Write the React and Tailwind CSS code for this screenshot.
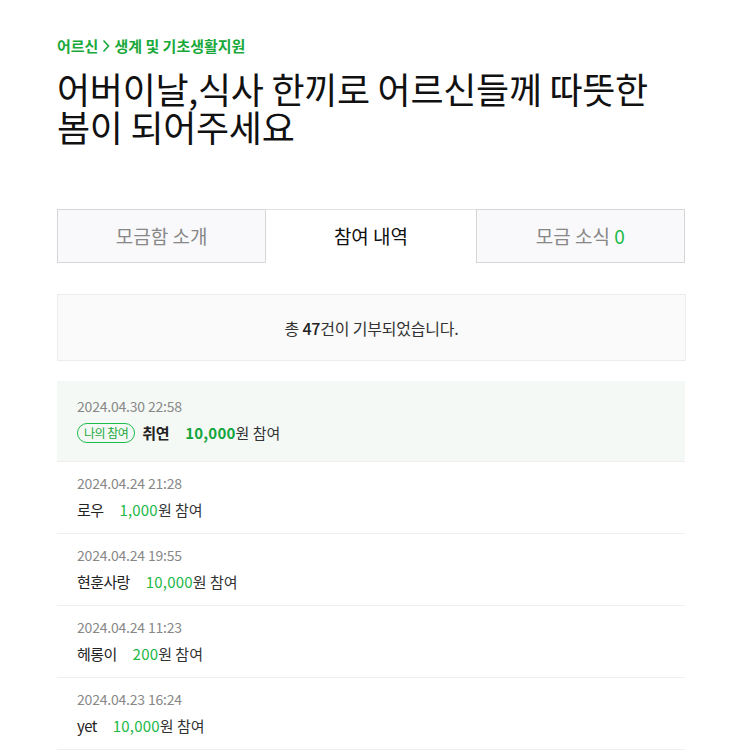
import React from 'react';

const donations = [
  { date: '2024.04.30 22:58', name: '취연', amount: '10,000', mine: true },
  { date: '2024.04.24 21:28', name: '로우', amount: '1,000' },
  { date: '2024.04.24 19:55', name: '현훈사랑', amount: '10,000' },
  { date: '2024.04.24 11:23', name: '헤롱이', amount: '200' },
  { date: '2024.04.23 16:24', name: 'yet', amount: '10,000' },
];

const font = { fontFamily: '"Noto Sans CJK KR", "Noto Sans", sans-serif' };

const DonationRow = ({ item }) => {
  if (item.mine) {
    return (
      <li className="bg-[#f5f9f6] border-b border-[#eeeeee] pl-5 pt-[15px] pb-[17px]">
        <p className="text-[14px] leading-5 text-[#888888] tracking-[-0.2px]">{item.date}</p>
        <div className="mt-[6px] flex items-center h-[22px]">
          <span className="inline-flex items-center h-[20px] px-[6px] rounded-full border border-[#1dbb4a] text-[12px] text-[#19a83a] tracking-[-0.5px]">
            나의 참여
          </span>
          <span className="ml-[7px] text-[15px] font-bold text-[#222222] tracking-[-0.4px]">{item.name}</span>
          <span className="ml-[16px] text-[15px] text-[#333333]">
            <b className="font-bold text-[#12a53b] tracking-[0.2px]">{item.amount}</b>원 참여
          </span>
        </div>
      </li>
    );
  }
  return (
    <li className="border-b border-[#eeeeee] pl-5 pt-[11px] pb-[12px]">
      <p className="text-[14px] leading-5 text-[#888888] tracking-[-0.2px]">{item.date}</p>
      <div className="mt-[6px] flex items-center h-[22px] text-[15px]">
        <span className="text-[#222222] tracking-[-0.6px]">{item.name}</span>
        <span className="ml-[16px] text-[#333333]">
          <span className="text-[#1db847] tracking-[0.2px]">{item.amount}</span>원 참여
        </span>
      </div>
    </li>
  );
};

export default function App() {
  return (
    <div className="min-h-screen bg-white" style={font}>
      <div className="ml-[57px] w-[628px] pt-[34px]">
        <nav className="flex items-center text-[15px] font-bold text-[#19a83a] tracking-[0px] leading-6">
          <span>어르신</span>
          <svg width="10" height="14" viewBox="0 0 10 14" className="mx-[3px]">
            <path d="M2.5 1.5 L7.5 7 L2.5 12.5" fill="none" stroke="#19a83a" strokeWidth="1.6" />
          </svg>
          <span>생계 및 기초생활지원</span>
        </nav>

        <h1 className="mt-[11px] text-[36px] leading-[38px] text-[#111111] tracking-[-0.3px]">
          어버이날,식사 한끼로 어르신들께 따뜻한<br />봄이 되어주세요
        </h1>

        <div className="mt-[64px] grid grid-cols-3 h-[54px] text-[19px]">
          <button className="bg-[#f9f9fb] border border-[#d6d6d6] text-[#888888]">모금함 소개</button>
          <button className="bg-white border-t border-[#e3e3e3] text-[#111111]">참여 내역</button>
          <button className="bg-[#f9f9fb] border border-[#d6d6d6] text-[#888888]">
            모금 소식 <span className="text-[#1dbb4a]">0</span>
          </button>
        </div>

        <div className="mt-[31px] w-[629px] h-[67px] flex items-center justify-center bg-[#fafafa] border border-[#ececec] text-[16px] text-[#333333] tracking-[-0.2px]">
          총&nbsp;<span className="font-medium text-[#222222]">47</span>건이 기부되었습니다.
        </div>

        <ul className="mt-[20px]">
          {donations.map((item) => (
            <DonationRow key={item.date} item={item} />
          ))}
        </ul>
      </div>
    </div>
  );
}
